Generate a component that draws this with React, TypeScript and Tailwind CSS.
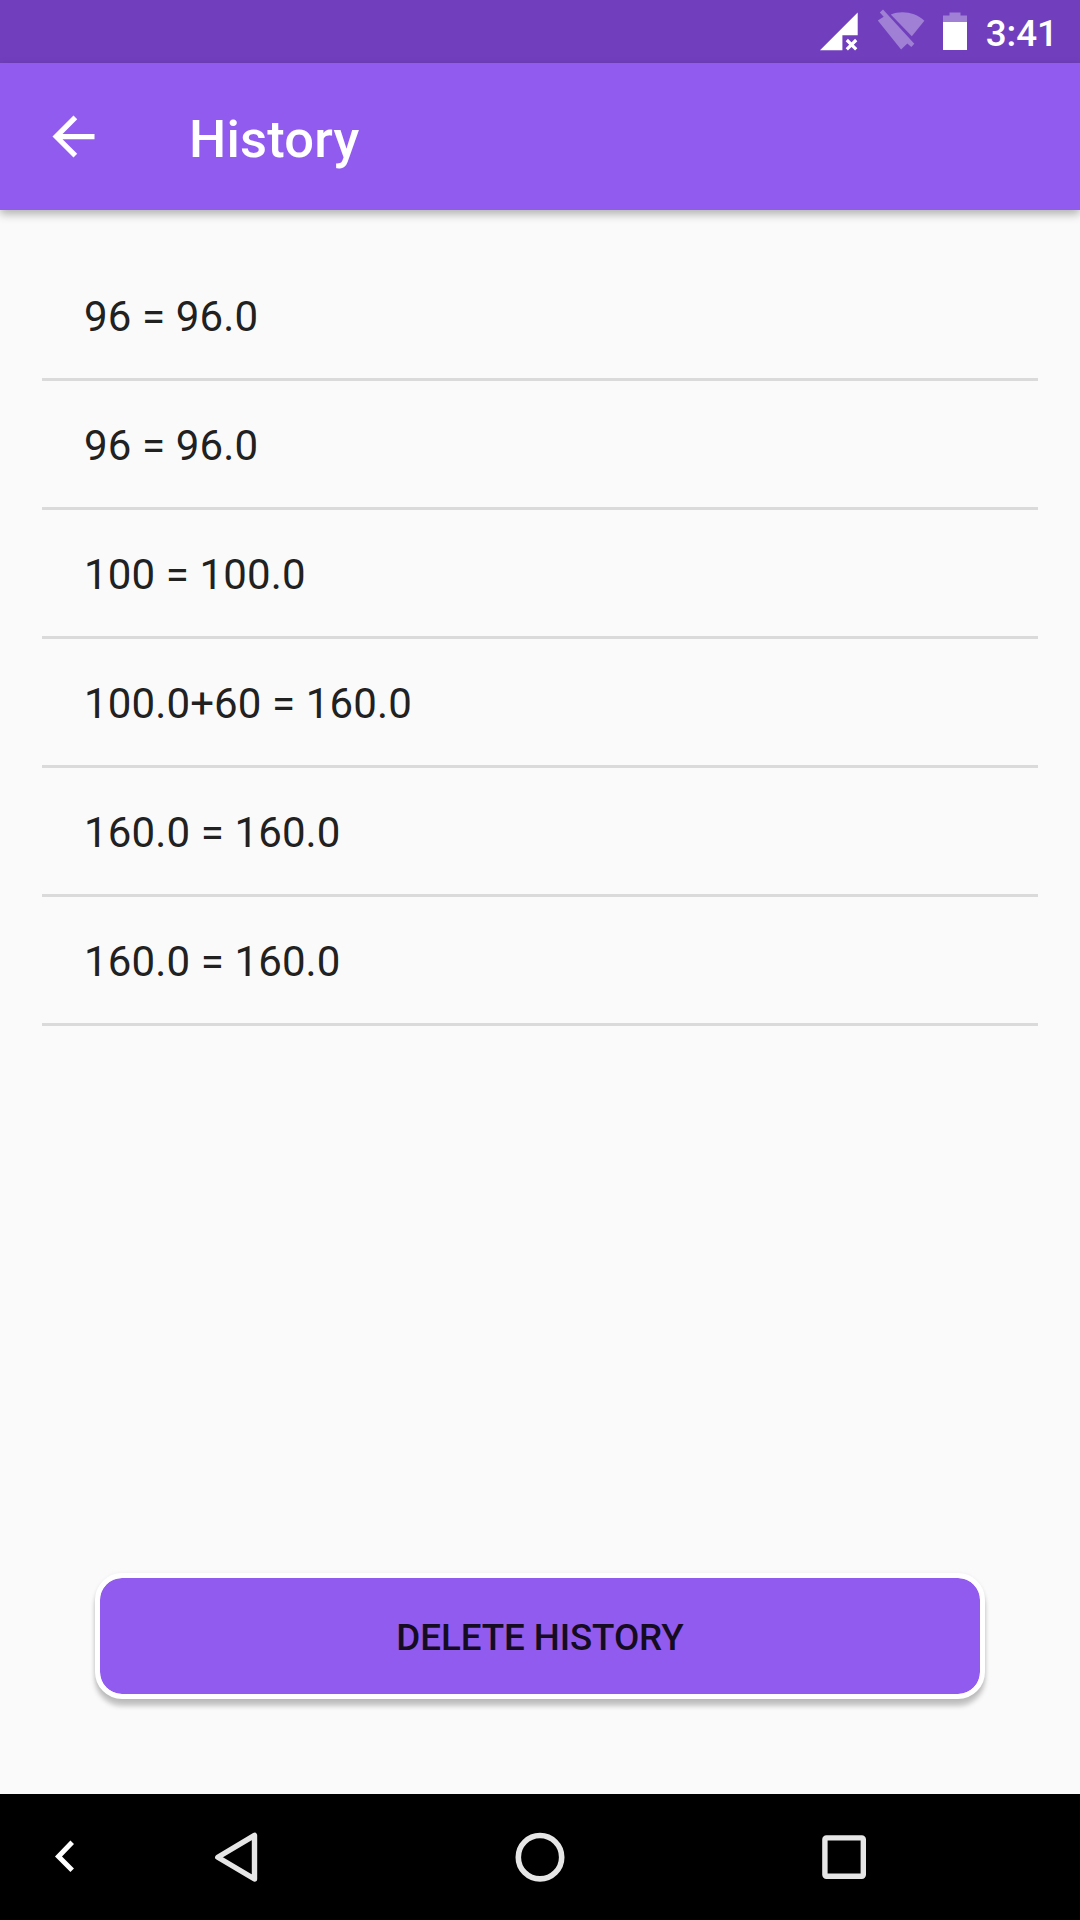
const history = [
  "96 = 96.0",
  "96 = 96.0",
  "100 = 100.0",
  "100.0+60 = 160.0",
  "160.0 = 160.0",
  "160.0 = 160.0",
];

function StatusBar() {
  return (
    <div className="flex h-[63px] items-start justify-end bg-[#713fbe] pr-[22px] text-white">
      {/* Cell signal, no data */}
      <svg width="40" height="40" viewBox="0 0 40 40" className="mt-3">
        <path d="M0 38.3 37.7.6v22.6H22.4v15.1z" fill="currentColor" />
        <path d="m26.8 28 9.4 9.4m0-9.4-9.4 9.4" stroke="currentColor" strokeWidth="3.2" />
      </svg>
      {/* Wifi off */}
      <svg width="50" height="44" viewBox="0 0 50 44" className="mt-2 ml-4 text-[#a080d4]">
        <path
          d="M7 1.6 38.3 35.8 35.3 39l-4-3.6-6.2 6L1.8 12.4l5.9-3.6L3.8 4.4z"
          fill="currentColor"
        />
        <path d="M14.8 6.6C25 2.2 39 4 48.4 12.7L35.8 28.2z" fill="currentColor" />
      </svg>
      {/* Battery */}
      <svg width="24" height="40" viewBox="0 0 24 40" className="mt-3 ml-[17px]">
        <path d="M6.5.4h11v3H24V10H0V3.4h6.5z" fill="#a080d4" />
        <path d="M0 10h24v28H0z" fill="currentColor" />
      </svg>
      <span className="mt-3 ml-[19px] text-[36.75px] leading-[43px] font-medium">3:41</span>
    </div>
  );
}

function AppBar() {
  return (
    <header className="relative flex h-[147px] items-center bg-[#925bef] pl-[42px] text-white shadow-[0_4px_9px_rgba(0,0,0,0.3)]">
      <button aria-label="Back">
        <svg width="63" height="63" viewBox="0 0 24 24" fill="currentColor">
          <path d="M20 11H7.83l5.59-5.59L12 4l-8 8 8 8 1.41-1.41L7.83 13H20v-2z" />
        </svg>
      </button>
      <h1 className="ml-[84px] pt-1 text-[52.5px] leading-[62px] font-medium tracking-[0.2px]">History</h1>
    </header>
  );
}

function NavBar() {
  return (
    <nav className="flex h-[126px] items-center bg-black text-[#e6e6e6]">
      <svg width="22" height="34" viewBox="0 0 22 34" className="ml-[54px] text-white">
        <path d="M18.2 2.3 4.5 16.5l13.7 13.7" fill="none" stroke="currentColor" strokeWidth="5" />
      </svg>
      <svg width="50" height="54" viewBox="0 0 50 54" className="ml-[136px]">
        <path
          d="M42.5 5.4v43.6L5.8 27.3z"
          fill="none"
          stroke="currentColor"
          strokeWidth="5.4"
          strokeLinejoin="round"
        />
      </svg>
      <svg width="54" height="54" viewBox="0 0 54 54" className="ml-[251px]">
        <circle cx="27" cy="27.2" r="21.7" fill="none" stroke="currentColor" strokeWidth="5.6" />
      </svg>
      <svg width="50" height="50" viewBox="0 0 50 50" className="ml-[252px]">
        <rect x="5.9" y="5.9" width="38.4" height="38.4" rx="1.5" fill="none" stroke="currentColor" strokeWidth="5.4" />
      </svg>
    </nav>
  );
}

export default function App() {
  return (
    <div className="flex h-[1920px] w-[1080px] flex-col bg-[#fafafa] font-['Roboto',sans-serif]">
      <StatusBar />
      <AppBar />

      <main className="flex flex-1 flex-col px-[42px] pt-[42px]">
        <ul>
          {history.map((entry, i) => (
            <li
              key={i}
              className="flex h-[129px] items-center border-b-3 border-[#dadada] px-[42px] pt-0.5 text-[42px] tracking-[0.13px] text-[#212121]"
            >
              {entry}
            </li>
          ))}
        </ul>

        <button className="mx-[53px] mt-auto mb-[95px] h-[126px] rounded-[27px] border-5 border-white bg-[#925bef] bg-clip-padding pt-[3px] text-[36.75px] font-medium tracking-[-0.1px] text-[#150c22] shadow-[0_7px_5px_rgba(0,0,0,0.22),0_1px_4px_rgba(0,0,0,0.08)]">
          DELETE HISTORY
        </button>
      </main>

      <NavBar />
    </div>
  );
}
